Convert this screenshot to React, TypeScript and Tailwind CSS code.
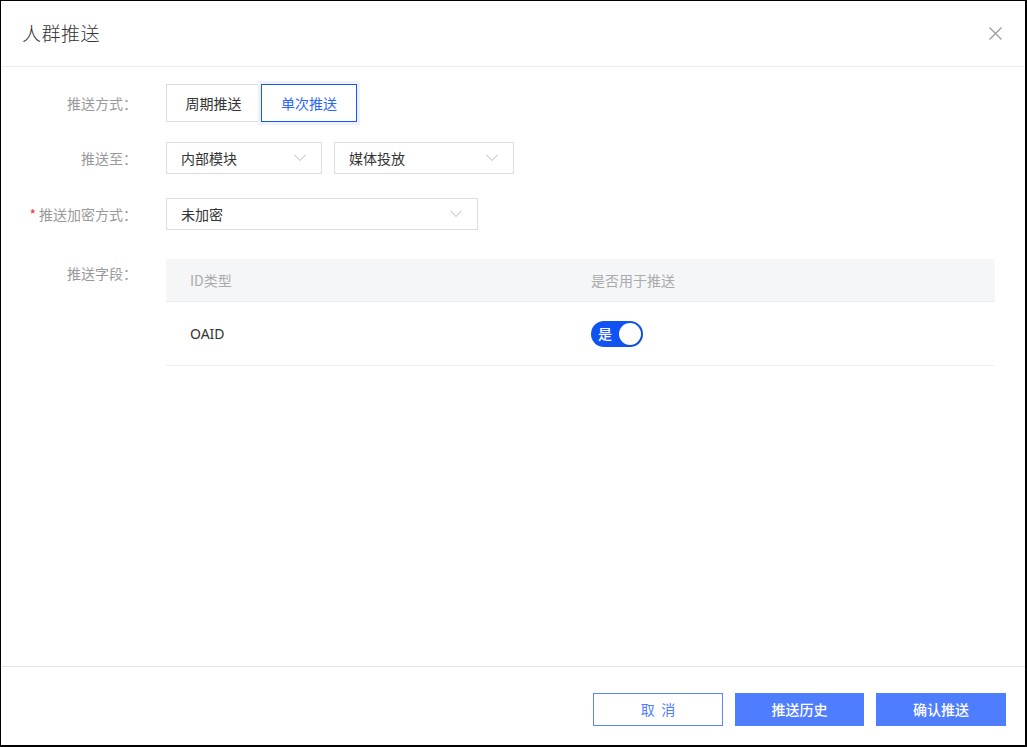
import React from "react";

const font = { fontFamily: '"Noto Sans CJK SC", "Noto Sans", sans-serif' };

function Chevron() {
  return (
    <svg width="12" height="8" viewBox="0 0 12 8" className="shrink-0">
      <path d="M0.5 0.8 L6 6.6 L11.5 0.8" fill="none" stroke="#b8b8b8" strokeWidth="1" />
    </svg>
  );
}

function Select({ w, text }: { w: string; text: string }) {
  return (
    <div className={`${w} h-[32px] border border-[#dcdcdc] flex items-center justify-between pl-[14px] pr-[15px] text-[14px] text-[#333]`}>
      <span>{text}</span>
      <Chevron />
    </div>
  );
}

function Label({ children, req }: { children: React.ReactNode; req?: boolean }) {
  return (
    <div className="w-[136px] mr-[29px] shrink-0 text-right text-[14px] text-[#999] whitespace-nowrap">
      {req && <span className="text-[#e4393c] mr-[3px]">*</span>}
      {children}
    </div>
  );
}

export default function App() {
  return (
    <div
      style={font}
      className="w-[1027px] h-[747px] bg-white border-l border-t border-r-2 border-b-2 border-black flex flex-col"
    >
      <div className="h-[66px] shrink-0 border-b border-[#ececec] flex items-center justify-between pl-[21px] pr-[23px]">
        <div className="text-[19px] font-light text-[#333] tracking-[0.5px]">人群推送</div>
        <svg width="13" height="13" viewBox="0 0 13 13">
          <path d="M0.5 0.5 L12.5 12.5 M12.5 0.5 L0.5 12.5" stroke="#999" strokeWidth="1.2" />
        </svg>
      </div>

      <div className="flex-1 flex flex-col pt-[17px]">
        <div className="flex items-center h-[38px]">
          <Label>推送方式：</Label>
          <div className="flex text-[14px]">
            <div className="w-[95px] h-[38px] border border-[#dcdcdc] flex items-center justify-center text-[#333]">
              周期推送
            </div>
            <div className="w-[96px] h-[38px] border border-[#1a56f5] flex items-center justify-center text-[#2d66ff] shadow-[0_0_0_3px_#eef2ff]">
              单次推送
            </div>
          </div>
        </div>

        <div className="flex items-center h-[32px] mt-[20px]">
          <Label>推送至：</Label>
          <div className="flex gap-[12px]">
            <Select w="w-[156px]" text="内部模块" />
            <Select w="w-[180px]" text="媒体投放" />
          </div>
        </div>

        <div className="flex items-center h-[32px] mt-[24px]">
          <Label req>推送加密方式：</Label>
          <Select w="w-[312px]" text="未加密" />
        </div>

        <div className="flex mt-[29px]">
          <div className="pt-[4px]">
            <Label>推送字段：</Label>
          </div>
          <div className="w-[829px] text-[14px]">
            <div className="h-[43px] bg-[#f5f6f8] border-b border-[#ebeef5] flex items-center text-[#aaa]">
              <div className="w-[425px] pl-[24px]">ID类型</div>
              <div>是否用于推送</div>
            </div>
            <div className="h-[64px] border-b border-[#ebeef5] flex items-center text-[#333]">
              <div className="w-[425px] pl-[24px]" style={{ fontFamily: '"Noto Sans", sans-serif' }}>OAID</div>
              <div className="w-[52px] h-[26px] rounded-full bg-[#1152f2] flex items-center justify-between pl-[7px] pr-[2px]">
                <span className="text-white text-[14px] font-medium">是</span>
                <span className="w-[22px] h-[22px] rounded-full bg-white shadow-[1px_1px_3px_rgba(0,0,0,0.15)]" />
              </div>
            </div>
          </div>
        </div>
      </div>

      <div className="h-[79px] shrink-0 border-t border-[#e4e4e4] flex items-start justify-end pt-[26px] pr-[19px] gap-[12px] text-[14px]">
        <div className="w-[130px] h-[33px] border border-[#5b83ff] text-[#4e7cff] flex items-center justify-center whitespace-pre">取  消</div>
        <div className="w-[129px] h-[33px] bg-[#4f7dff] text-white flex items-center justify-center font-medium">推送历史</div>
        <div className="w-[130px] h-[33px] bg-[#4f7dff] text-white flex items-center justify-center font-medium">确认推送</div>
      </div>
    </div>
  );
}
